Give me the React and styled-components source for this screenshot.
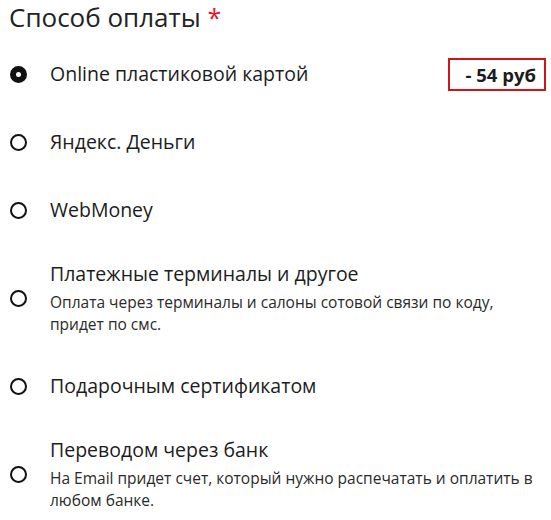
import styled, { createGlobalStyle } from "styled-components";

const Global = createGlobalStyle`
  body {
    margin: 0;
    background: #fff;
    font-family: "Open Sans", "Noto Sans", sans-serif;
    color: #1c1c1c;
  }
`;

const methods = [
  { id: "card", title: "Online пластиковой картой", discount: "- 54 руб" },
  { id: "yandex", title: "Яндекс. Деньги" },
  { id: "webmoney", title: "WebMoney" },
  {
    id: "terminal",
    title: "Платежные терминалы и другое",
    note: "Оплата через терминалы и салоны сотовой связи по коду, придет по смс.",
  },
  { id: "gift", title: "Подарочным сертификатом" },
  {
    id: "bank",
    title: "Переводом через банк",
    note: "На Email придет счет, который нужно распечатать и оплатить в любом банке.",
  },
];

const App = () => {
  return (
    <Wrap>
      <Global />
      <Heading>
        Способ оплаты <Star>*</Star>
      </Heading>
      <List>
        {methods.map((m, i) => (
          <Item key={m.id}>
            <Radio $checked={i === 0} />
            <Body>
              <Label>{m.title}</Label>
              {m.note && <Note>{m.note}</Note>}
            </Body>
            {m.discount && <Discount>{m.discount}</Discount>}
          </Item>
        ))}
      </List>
    </Wrap>
  );
};

const Wrap = styled.div`
  width: 551px;
  height: 520px;
  box-sizing: border-box;
  padding: 1px 5px 0 9px;
  overflow: hidden;
`;

const Heading = styled.h1`
  margin: 0 0 7px;
  font-size: 26px;
  line-height: 32px;
  font-weight: 400;
  color: #222;
`;

const Star = styled.span`
  color: #e3172d;
  font-size: 25px;
`;

const List = styled.div`
  display: flex;
  flex-direction: column;
`;

const Item = styled.div`
  display: flex;
  align-items: center;
  gap: 23px;
  min-height: 34px;
  padding: 17px 0;
`;

const Radio = styled.span`
  flex: none;
  width: 17px;
  height: 17px;
  box-sizing: border-box;
  border-radius: 50%;
  border: ${(p) => (p.$checked ? "6px solid #111" : "2.5px solid #111")};
  background: #fff;
  margin-left: 1px;
`;

const Body = styled.div`
  flex: 1;
  display: flex;
  flex-direction: column;
`;

const Label = styled.div`
  font-size: 19.5px;
  line-height: 26px;
  color: #1c1c1c;
`;

const Note = styled.div`
  margin-top: 4px;
  font-size: 15.5px;
  line-height: 22px;
  color: #2a2a2a;
`;

const Discount = styled.div`
  flex: none;
  width: 98px;
  height: 33px;
  box-sizing: border-box;
  border: 2px solid #d3121b;
  display: flex;
  align-items: center;
  justify-content: flex-end;
  padding-right: 8px;
  font-size: 18.5px;
  font-weight: 700;
  color: #1c1c1c;
`;

export default App;
